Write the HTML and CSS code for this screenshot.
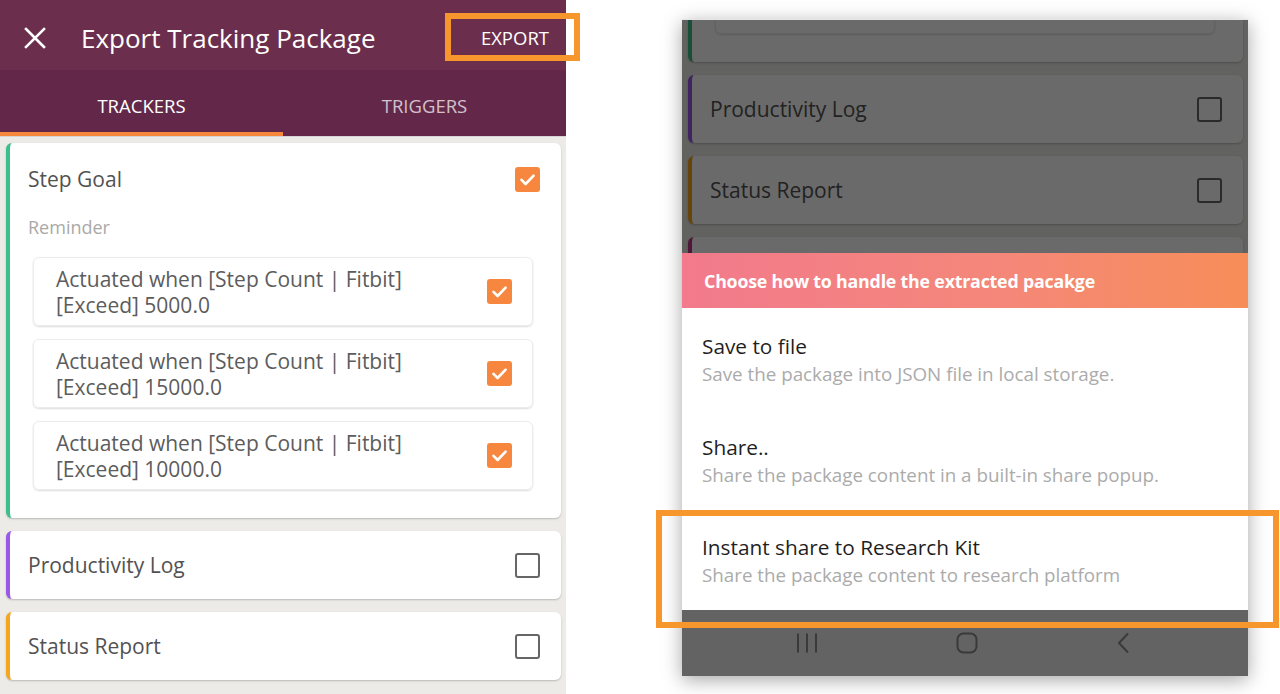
FILE: index.html
```html
<!DOCTYPE html>
<html>
<head>
<meta charset="utf-8">
<link rel="stylesheet" href="styles.css">
</head>
<body>
<div class="stage">
  <section class="app">
    <header class="appbar">
      <div class="toolbar">
        <svg class="close" width="22" height="22" viewBox="0 0 22 22"><path d="M2 2 L20 20 M20 2 L2 20" stroke="#fff" stroke-width="2.6" stroke-linecap="square"/></svg>
        <h1 class="title">Export Tracking Package</h1>
        <span class="action">EXPORT</span>
      </div>
      <nav class="tabs">
        <div class="tab active">TRACKERS</div>
        <div class="tab">TRIGGERS</div>
      </nav>
    </header>
    <div class="list">
      <div class="card green">
        <div class="card-head">
          <span class="card-title">Step Goal</span>
          <span class="cb checked"><svg width="25" height="25" viewBox="0 0 25 25"><path d="M6.5 12.8 L10.6 17 L18.6 8.6" fill="none" stroke="#fff" stroke-width="2.6" stroke-linecap="round" stroke-linejoin="round"/></svg></span>
        </div>
        <div class="section-label">Reminder</div>
        <div class="subcards">
          <div class="subcard">
            <span class="subtext">Actuated when [Step Count | Fitbit]<br>[Exceed] 5000.0</span>
            <span class="cb checked"><svg width="25" height="25" viewBox="0 0 25 25"><path d="M6.5 12.8 L10.6 17 L18.6 8.6" fill="none" stroke="#fff" stroke-width="2.6" stroke-linecap="round" stroke-linejoin="round"/></svg></span>
          </div>
          <div class="subcard">
            <span class="subtext">Actuated when [Step Count | Fitbit]<br>[Exceed] 15000.0</span>
            <span class="cb checked"><svg width="25" height="25" viewBox="0 0 25 25"><path d="M6.5 12.8 L10.6 17 L18.6 8.6" fill="none" stroke="#fff" stroke-width="2.6" stroke-linecap="round" stroke-linejoin="round"/></svg></span>
          </div>
          <div class="subcard">
            <span class="subtext">Actuated when [Step Count | Fitbit]<br>[Exceed] 10000.0</span>
            <span class="cb checked"><svg width="25" height="25" viewBox="0 0 25 25"><path d="M6.5 12.8 L10.6 17 L18.6 8.6" fill="none" stroke="#fff" stroke-width="2.6" stroke-linecap="round" stroke-linejoin="round"/></svg></span>
          </div>
        </div>
      </div>
      <div class="card purple row">
        <span class="card-title">Productivity Log</span>
        <span class="cb"></span>
      </div>
      <div class="card amber row">
        <span class="card-title">Status Report</span>
        <span class="cb"></span>
      </div>
    </div>
  </section>

  <section class="phone">
    <div class="screen">
      <div class="list scrolled">
        <div class="card green stub">
          <div class="subcard stub"></div>
        </div>
        <div class="card purple row"><span class="card-title">Productivity Log</span><span class="cb"></span></div>
        <div class="card amber row"><span class="card-title">Status Report</span><span class="cb"></span></div>
        <div class="card magenta row"></div>
      </div>
      <div class="scrim"></div>
      <div class="sheet">
        <div class="sheet-head">Choose how to handle the extracted pacakge</div>
        <div class="option">
          <div class="opt-title">Save to file</div>
          <div class="opt-sub">Save the package into JSON file in local storage.</div>
        </div>
        <div class="option">
          <div class="opt-title">Share..</div>
          <div class="opt-sub">Share the package content in a built-in share popup.</div>
        </div>
        <div class="option">
          <div class="opt-title">Instant share to Research Kit</div>
          <div class="opt-sub">Share the package content to research platform</div>
        </div>
      </div>
    </div>
    <div class="navbar">
      <svg width="22" height="22" viewBox="0 0 22 22"><path d="M2 1.5 V20.5 M11 1.5 V20.5 M20 1.5 V20.5" stroke="#3a3a3a" stroke-width="2"/></svg>
      <svg width="22" height="22" viewBox="0 0 22 22"><rect x="1.5" y="1.5" width="19" height="19" rx="6" fill="none" stroke="#3a3a3a" stroke-width="2"/></svg>
      <svg width="16" height="22" viewBox="0 0 16 22"><path d="M12 1.5 L3 11 L12 20.5" fill="none" stroke="#3a3a3a" stroke-width="2" stroke-linejoin="round"/></svg>
    </div>
  </section>

  <div class="mark mark-export"></div>
  <div class="mark mark-instant"></div>
</div>
</body>
</html>
```

FILE: styles.css
```css
* { box-sizing: border-box; }
html, body { margin: 0; padding: 0; }
body {
  background: #ffffff;
  font-family: "Open Sans", Roboto, sans-serif;
  width: 1280px;
  height: 694px;
  overflow: hidden;
}
.stage {
  position: relative;
  display: flex;
  align-items: flex-start;
  width: 1280px;
  height: 694px;
}

/* ---------- left app ---------- */
.app {
  width: 566px;
  height: 694px;
  background: #ecebe8;
  flex: none;
  overflow: hidden;
}
.appbar { background: #632849; }
.toolbar {
  height: 70px;
  background: #6b2f4d;
  display: flex;
  align-items: center;
  padding: 5px 0 0 24px;
}
.close { flex: none; }
.title {
  margin: 0 0 0 35px;
  font-weight: 400;
  font-size: 26px;
  color: #ffffff;
  flex: 1;
}
.action {
  color: #ffffff;
  font-size: 18.5px;
  margin-right: 17px;
}
.tabs {
  display: flex;
  height: 67px;
  border-bottom: 1px solid #d8d4d6;
}
.tab {
  flex: 1;
  display: flex;
  align-items: center;
  justify-content: center;
  padding-top: 8px;
  font-size: 18.5px;
  color: rgba(255, 255, 255, 0.72);
  border-bottom: 4px solid transparent;
}
.tab.active {
  color: #ffffff;
  border-bottom-color: #f7873a;
}

.list {
  display: flex;
  flex-direction: column;
  gap: 13px;
  padding: 6px 5px 0 6px;
}
.card {
  background: #ffffff;
  border-radius: 6px;
  border-left: 4px solid #3fbf8b;
  box-shadow: 0 1px 2px rgba(0, 0, 0, 0.22);
  padding: 0 21px 28px 18px;
}
.card.green { border-left-color: #3cbf8a; }
.card.purple { border-left-color: #9a58e8; }
.card.amber { border-left-color: #f5a51e; }
.card.magenta { border-left-color: #c13a86; }
.card.row {
  height: 68px;
  padding-bottom: 0;
  display: flex;
  align-items: center;
  justify-content: space-between;
}
.card-head {
  height: 72px;
  display: flex;
  align-items: center;
  justify-content: space-between;
}
.card-title {
  font-size: 21px;
  color: #525252;
}
.section-label {
  font-size: 18px;
  line-height: 24px;
  color: #a9a9a9;
}
.subcards {
  display: flex;
  flex-direction: column;
  gap: 13px;
  margin: 18px 7px 0 5px;
}
.subcard {
  height: 69px;
  border-radius: 6px;
  border: 1px solid #ececec;
  box-shadow: 0 1px 2px rgba(0, 0, 0, 0.14);
  display: flex;
  align-items: center;
  justify-content: space-between;
  padding: 0 20px 0 22px;
}
.subtext {
  font-size: 21px;
  line-height: 26px;
  color: #5c5c5c;
}
.cb {
  width: 25px;
  height: 25px;
  flex: none;
  border-radius: 3px;
  border: 2.5px solid #666666;
  display: block;
}
.cb.checked {
  background: #f7873f;
  border: none;
}
.cb svg { display: block; }

/* ---------- right phone ---------- */
.phone {
  margin: 19px 0 0 116px;
  width: 566px;
  height: 657px;
  flex: none;
  display: flex;
  flex-direction: column;
  box-shadow: 0 4px 18px rgba(0, 0, 0, 0.35);
  border-top: 1px solid #e6e6e6;
}
.screen {
  position: relative;
  flex: 1;
  overflow: hidden;
  background: #ecebe8;
}
.list.scrolled {
  padding-top: 0;
}
.card.stub {
  height: 42px;
  border-top-left-radius: 0;
  border-top-right-radius: 0;
  padding-bottom: 0;
  padding-left: 23px;
  padding-right: 0;
}
.subcard.stub {
  height: 14px;
  width: 500px;
  border-top: none;
  border-top-left-radius: 0;
  border-top-right-radius: 0;
}
.scrim {
  position: absolute;
  inset: 0;
  background: rgba(0, 0, 0, 0.585);
}
.sheet {
  position: absolute;
  left: 0;
  right: 0;
  bottom: 0;
  height: 357px;
  background: #ffffff;
  display: flex;
  flex-direction: column;
}
.sheet-head {
  height: 55px;
  flex: none;
  background: linear-gradient(90deg, #f27a8c 0%, #f4877a 55%, #f78e58 100%);
  color: #ffffff;
  font-weight: 700;
  font-size: 17.8px;
  display: flex;
  align-items: center;
  padding-left: 22px;
  letter-spacing: -0.2px;
}
.option {
  flex: 1;
  padding: 25px 20px 0 20px;
}
.opt-title {
  font-size: 20.8px;
  line-height: 26px;
  color: #1f1f1f;
}
.opt-sub {
  margin-top: 3px;
  font-size: 18.8px;
  line-height: 24px;
  color: #ababab;
}
.navbar {
  height: 66px;
  flex: none;
  background: #636363;
  display: flex;
  align-items: center;
  gap: 138px;
  padding-left: 114px;
}

/* ---------- annotations ---------- */
.mark {
  position: absolute;
  border: 6px solid #f7962c;
}
.mark-export {
  left: 445px;
  top: 13px;
  width: 135px;
  height: 48px;
}
.mark-instant {
  left: 656px;
  top: 510px;
  width: 623px;
  height: 118px;
}
```
